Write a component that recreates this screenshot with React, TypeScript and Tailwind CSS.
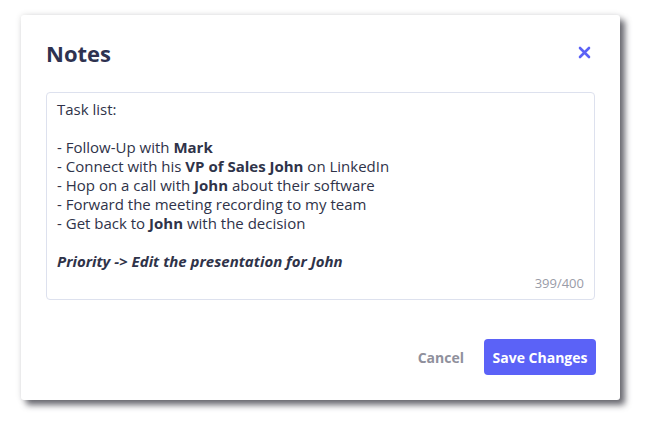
import React from "react";

export default function App() {
  return (
    <div
      className="w-[645px] h-[427px] bg-white relative"
      style={{ fontFamily: "'Open Sans', Lato, sans-serif" }}
    >
      <div className="absolute left-[21px] top-[15px] w-[599px] h-[385px] bg-white rounded-[3px] shadow-[5px_5px_6px_rgba(60,60,70,0.75),0_0_6px_rgba(0,0,0,0.12)] flex flex-col px-[25px]">
        <div className="flex items-center justify-between h-[77px] pb-[2px]">
          <h1 className="text-[22px] font-bold text-[#2e3250] leading-none">Notes</h1>
          <button className="w-[16px] h-[16px] flex items-center justify-center mr-[3px]">
            <svg width="13" height="13" viewBox="0 0 13 13">
              <path d="M2 2 L11 11 M11 2 L2 11" stroke="#5b62f6" strokeWidth="2.6" strokeLinecap="round" />
            </svg>
          </button>
        </div>
        <div className="h-[208px] border border-[#dde1ee] rounded-[4px] px-[10px] pt-[7px] relative text-[15px] leading-[19px] text-[#2f3349]">
          <div>Task list:</div>
          <div className="h-[19px]" />
          <div>- Follow-Up with <b>Mark</b></div>
          <div>- Connect with his <b>VP of Sales John</b> on LinkedIn</div>
          <div>- Hop on a call with <b>John</b> about their software</div>
          <div>- Forward the meeting recording to my team</div>
          <div>- Get back to <b>John</b> with the decision</div>
          <div className="h-[19px]" />
          <div className="font-bold italic">Priority -&gt; Edit the presentation for John</div>
          <div className="absolute right-[10px] bottom-[9px] text-[13px] leading-none text-[#9a9ca8]">399/400</div>
        </div>
        <div className="flex items-center justify-end mt-[39px] gap-[20px] -mr-[1px]">
          <button className="text-[14px] font-bold text-[#8f909c]">Cancel</button>
          <button className="h-[36px] w-[112px] rounded-[4px] bg-[#5b62f7] text-white text-[14px] font-bold">
            Save Changes
          </button>
        </div>
      </div>
    </div>
  );
}
